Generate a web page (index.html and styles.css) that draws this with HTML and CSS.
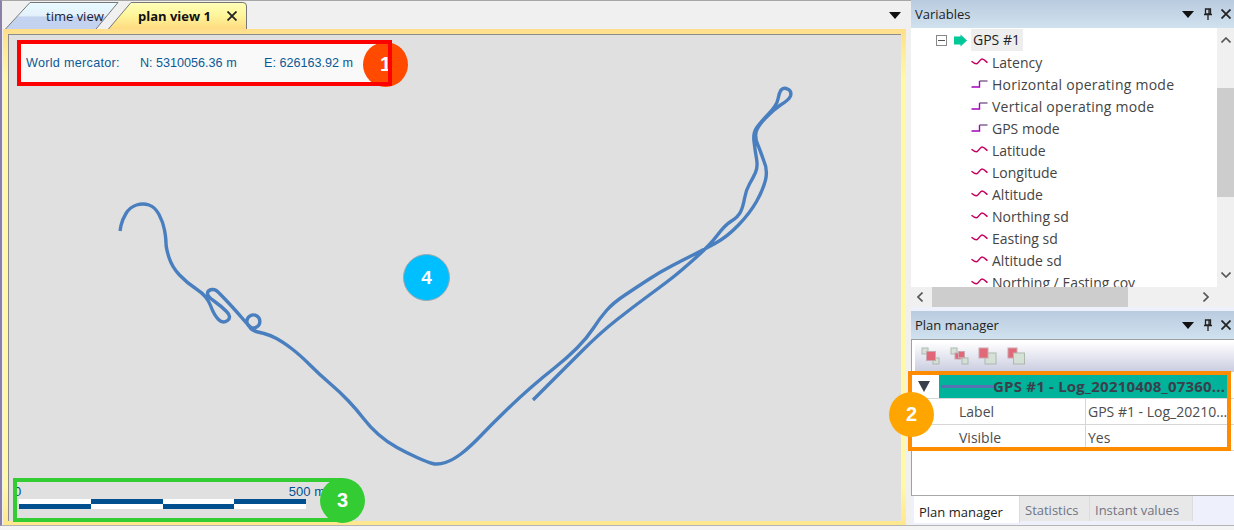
FILE: index.html
```html
<!DOCTYPE html>
<html lang="en">
<head>
<meta charset="utf-8">
<title>plan view 1</title>
<link rel="stylesheet" href="styles.css">
</head>
<body>
<svg class="defs" width="0" height="0" aria-hidden="true">
  <symbol id="wave" viewBox="0 0 17 8"><path d="M.5 3.200C2 4.500 3.500 5.800 5.500 5.800 7.500 5.800 9 1 11 1 13 1 15 3.500 16.500 4.700" fill="none" stroke="#c6005f" stroke-width="1.500"/></symbol>
  <symbol id="step" viewBox="0 0 17 8"><path d="M.5 7H8.500V1" fill="none" stroke="#a800c0" stroke-width="1.400"/><path d="M8.500 1H16.500" fill="none" stroke="#7a5a8a" stroke-width="1.400"/></symbol>
  <symbol id="menu" viewBox="0 0 12 7"><path d="M0 0H12L6 7Z" fill="#111"/></symbol>
  <symbol id="pin" viewBox="0 0 10 12"><path d="M2.500 1H7.500V6H2.500ZM6 1V6M1 6.500H9M5 7V12" fill="none" stroke="#222" stroke-width="1.300"/></symbol>
  <symbol id="close" viewBox="0 0 10 10"><path d="M.5.500 9.500 9.500M9.500.500.500 9.500" fill="none" stroke="#222" stroke-width="1.800"/></symbol>
  <symbol id="chev-up" viewBox="0 0 10 6"><path d="M.5 5.500 5 1l4.500 4.500" fill="none" stroke="#555" stroke-width="1.600"/></symbol>
  <symbol id="chev-down" viewBox="0 0 10 6"><path d="M.5.500 5 5 9.500.500" fill="none" stroke="#555" stroke-width="1.600"/></symbol>
  <symbol id="chev-left" viewBox="0 0 6 10"><path d="M5.500.500 1 5l4.500 4.500" fill="none" stroke="#555" stroke-width="1.600"/></symbol>
  <symbol id="chev-right" viewBox="0 0 6 10"><path d="M.5.500 5 5 .5 9.500" fill="none" stroke="#555" stroke-width="1.600"/></symbol>
</svg>

<div class="app">
  <main class="main">
    <div class="tabstrip">
      <div class="doc-tab doc-tab-time">
        <svg class="tab-shape" viewBox="0 0 114 27" preserveAspectRatio="none"><defs><linearGradient id="tg1" x1="0" y1="0" x2="0" y2="1"><stop offset="0" stop-color="#eafcff"/><stop offset=".5" stop-color="#e2f0fb"/><stop offset=".55" stop-color="#c4d3ee"/><stop offset="1" stop-color="#c3d2f0"/></linearGradient></defs><path d="M.5 27 25 .5H113L91 27" fill="url(#tg1)" stroke="#777"/></svg>
        <span class="tab-label">time view</span>
      </div>
      <div class="doc-tab doc-tab-plan">
        <svg class="tab-shape" viewBox="0 0 139 27" preserveAspectRatio="none"><defs><linearGradient id="tg2" x1="0" y1="0" x2="0" y2="1"><stop offset="0" stop-color="#ffffb8"/><stop offset=".5" stop-color="#fff59a"/><stop offset="1" stop-color="#ffda80"/></linearGradient></defs><path d="M.5 27 23 .5H135Q138.500 .5 138.500 4V27" fill="url(#tg2)" stroke="#777"/></svg>
        <span class="tab-label tab-label-active">plan view 1</span>
        <svg class="tab-close"><use href="#close"/></svg>
      </div>
      <svg class="strip-menu"><use href="#menu"/></svg>
    </div>
    <div class="frame">
      <div class="canvas">
        <svg class="track" viewBox="9 35 892 486">
          <path d="M120 231L121 225.500Q122 220 126 213.500Q130 207 136.500 205Q143 203 149 205Q155 207 159 214.500Q163 222 164.500 230Q166 238 166 243Q166 248 169 257.500Q172 267 179.500 275Q187 283 197 289.500Q207 296 210.500 305.500Q214 315 218.500 319.500Q223 324 227.500 320.500Q232 317 226.500 311.500Q221 306 214 301Q207 296 207.500 293Q208 290 212 289.500Q216 289 220 294Q224 298 230.500 305Q237 312 242.500 318.500Q246 323 251 327.500A6.500 6.500 0 1 0 249.400 326.600Q251 330 256 331.500Q260 332.700 264 333.500Q270 335 276.500 338.500Q283 342 291.500 348.500Q300 355 310 365Q320 375 330 383.500Q340 392 348.500 401Q357 410 363.500 418.500Q370 427 378.500 434.500Q387 442 397 447.500Q407 453 417 457.500Q427 462 432.500 463.500Q438 465 445.500 462.500Q453 460 461.500 453.500Q470 447 481.500 435Q493 423 506.500 410Q520 397 531.500 387Q543 377 555 367.500Q567 358 577 348Q587 338 593.500 328Q600 318 606.500 310.500Q613 303 625 295Q637 287 648.500 279.500Q660 272 671.500 266Q683 260 693 255Q703 250 715 243.500Q727 237 738.500 225Q750 213 756.500 201.500Q763 190 765.500 180Q768 170 763.500 160Q760 150 757.500 144Q755 138 756 132.500Q757 127 765 118.500Q773 110 780.500 105Q789 100 790.500 96Q792 91 787.500 89Q784 87 781 90Q779 93 778 99Q777 105 768.500 114Q760 123 756.500 128Q753 133 754 141.500Q755 150 756.500 158.500Q758 167 755.500 172.500Q753 178 749.500 184Q746 190 744.500 198.500Q743 207 740.500 212Q738 217 731.500 221Q725 225 717.500 235Q710 245 696 257.500Q682 270 674.500 276Q667 282 650 294.500Q633 307 616.500 320Q600 333 581.500 351.500Q563 370 548 385L533 400"/>
        </svg>
        <div class="coords">
          <span class="coord-world">World mercator:</span>
          <span class="coord-n">N: 5310056.36 m</span>
          <span class="coord-e">E: 626163.92 m</span>
        </div>
        <div class="scale">
          <div class="scale-labels"><span>0</span><span>500 m</span></div>
          <div class="scale-bar">
            <i class="seg seg-low"></i><i class="seg seg-high"></i><i class="seg seg-low"></i><i class="seg seg-high"></i>
          </div>
        </div>
      </div>
    </div>
  </main>

  <aside class="side">
    <section class="pane pane-vars">
      <header class="pane-head">
        <span class="pane-title">Variables</span>
        <svg class="ico-menu"><use href="#menu"/></svg>
        <svg class="ico-pin"><use href="#pin"/></svg>
        <svg class="ico-close"><use href="#close"/></svg>
      </header>
      <div class="tree-wrap">
        <div class="tree">
          <div class="node node-root">
            <span class="expander"></span>
            <svg class="arrow" viewBox="0 0 13 13"><path d="M0 2.500H6.500V.5L13 6.500 6.500 12.500V10.500H0Z" fill="#00c896"/></svg>
            <span class="node-sel">GPS #1</span>
          </div>
          <div class="node"><svg class="vi"><use href="#wave"/></svg>Latency</div>
          <div class="node node-wide"><svg class="vi"><use href="#step"/></svg>Horizontal operating mode</div>
          <div class="node node-wide"><svg class="vi"><use href="#step"/></svg>Vertical operating mode</div>
          <div class="node"><svg class="vi"><use href="#step"/></svg>GPS mode</div>
          <div class="node"><svg class="vi"><use href="#wave"/></svg>Latitude</div>
          <div class="node"><svg class="vi"><use href="#wave"/></svg>Longitude</div>
          <div class="node"><svg class="vi"><use href="#wave"/></svg>Altitude</div>
          <div class="node"><svg class="vi"><use href="#wave"/></svg>Northing sd</div>
          <div class="node"><svg class="vi"><use href="#wave"/></svg>Easting sd</div>
          <div class="node"><svg class="vi"><use href="#wave"/></svg>Altitude sd</div>
          <div class="node"><svg class="vi"><use href="#wave"/></svg>Northing / Easting cov</div>
        </div>
        <div class="vscroll">
          <svg class="chev-v"><use href="#chev-up"/></svg>
          <div class="vtrack"><div class="vthumb"></div></div>
          <svg class="chev-v"><use href="#chev-down"/></svg>
        </div>
      </div>
      <div class="hscroll">
        <svg class="chev-h"><use href="#chev-left"/></svg>
        <div class="htrack"><div class="hthumb"></div></div>
        <svg class="chev-h"><use href="#chev-right"/></svg>
      </div>
    </section>

    <section class="pane pane-plan">
      <header class="pane-head">
        <span class="pane-title">Plan manager</span>
        <svg class="ico-menu"><use href="#menu"/></svg>
        <svg class="ico-pin"><use href="#pin"/></svg>
        <svg class="ico-close"><use href="#close"/></svg>
      </header>
      <div class="plan-body">
        <div class="toolbar">
          <svg class="tool" viewBox="0 0 19 18"><rect x="1" y="1" width="6" height="6" class="sq-l"/><rect x="12" y="11" width="6" height="6" class="sq-l"/><rect x="5.500" y="4.500" width="9" height="9" class="sq-r"/></svg>
          <svg class="tool" viewBox="0 0 19 18"><rect x="1" y="1" width="6" height="6" class="sq-l"/><rect x="12" y="11" width="6" height="6" class="sq-l"/><rect x="5" y="6" width="6" height="6" class="sq-r"/><rect x="8.500" y="4.500" width="6" height="6" class="sq-r"/></svg>
          <svg class="tool" viewBox="0 0 19 18"><rect x="7" y="6" width="11" height="11" class="sq-l"/><rect x="1" y="1" width="9" height="10" class="sq-r"/></svg>
          <svg class="tool" viewBox="0 0 19 18"><rect x="1" y="1" width="9" height="10" class="sq-r"/><rect x="6.500" y="6" width="11" height="11" class="sq-l"/></svg>
        </div>
        <div class="group-row">
          <span class="group-toggle"><svg class="toggle-ico" viewBox="0 0 12 11"><path d="M0 0H12L6 11Z" fill="#3a3f4c"/></svg></span>
          <div class="group-head">
            <span class="group-line"></span>
            <span class="group-title">GPS #1 - Log_20210408_07360...</span>
          </div>
        </div>
        <div class="prop-row"><span class="prop-key">Label</span><span class="prop-val">GPS #1 - Log_20210...</span></div>
        <div class="prop-row"><span class="prop-key">Visible</span><span class="prop-val">Yes</span></div>
      </div>
      <nav class="pane-tabs">
        <span class="ptab ptab-active">Plan manager</span>
        <span class="ptab ptab-stats">Statistics</span>
        <span class="ptab ptab-inst">Instant values</span>
      </nav>
    </section>
  </aside>

  <div class="badge badge-1">1</div>
  <div class="mark mark-red"></div>
  <div class="mark mark-green"></div>
  <div class="badge badge-3">3</div>
  <div class="badge badge-4">4</div>
  <div class="mark mark-orange"></div>
  <div class="badge badge-2">2</div>
</div>
</body>
</html>
```

FILE: styles.css
```css
* { box-sizing: border-box; }
html, body { margin: 0; padding: 0; }
body { font-family: "Open Sans", "Liberation Sans", sans-serif; font-size: 14px; color: #333; overflow: hidden; }
.defs { position: absolute; }
svg { display: block; }

.app { position: relative; display: flex; align-items: flex-start; width: 1234px; height: 530px; background: #f4f4f4; overflow: hidden; }

/* ---- left document area ---- */
.main { width: 911px; height: 526px; display: flex; flex-direction: column; background: #f0f0f0; border-top: 1px solid #a6a6a6; border-left: 2px solid #8a7fa6; border-bottom: 1px solid #b4b4b4; }
.tabstrip { display: flex; height: 28px; position: relative; padding-left: 3px; padding-top: 1px; }
.doc-tab { position: relative; height: 27px; display: flex; align-items: center; }
.tab-shape { position: absolute; inset: 0; width: 100%; height: 100%; }
.doc-tab-time { width: 114px; padding-left: 41px; }
.doc-tab-plan { width: 139px; margin-left: -11px; padding-left: 30px; }
.tab-label { position: relative; font-size: 13px; color: #223; }
.tab-label-active { font-weight: 700; color: #111; }
.tab-close { position: relative; width: 10px; height: 10px; margin-left: 16px; }
.strip-menu { position: absolute; right: 10px; top: 11px; width: 12px; height: 7px; }

.frame { flex: 1; margin-left: 1px; margin-right: 5px; padding: 5px 5px 4px 5px; background: linear-gradient(#ffdf8c, #fff9a6 10%, #fff9a6 92%, #ffe78e); display: flex; }
.canvas { position: relative; flex: 1; background: #e0e0e0; border-top: 1px solid #8c8c8c; border-left: 1px solid #8c8c8c; overflow: hidden; }
.track { position: absolute; left: 0; top: 0; width: 892px; height: 486px; }
.track path { fill: none; stroke: #4a7fbf; stroke-width: 3.4; stroke-linejoin: round; }

.coords { position: absolute; left: 12px; top: 9px; width: 368px; height: 38px; background: #f9f9f9; display: flex; align-items: center; font-family: "Liberation Sans", sans-serif; font-size: 12.6px; color: #0a5a96; }
.coord-world { margin-left: 5px; width: 114px; letter-spacing: .3px; }
.coord-n { width: 124px; }

.scale { position: absolute; left: 10px; top: 449px; width: 320px; font-family: "Liberation Sans", sans-serif; font-size: 13px; color: #00508f; }
.scale-labels { display: flex; justify-content: space-between; height: 15px; line-height: 15px; margin-left: -5px; padding-right: 14px; }
.scale-bar { display: flex; width: 287px; height: 10px; }
.seg { flex: 1; display: block; background: #fff; }
.seg-low { background: linear-gradient(#fff 50%, #005090 50%); }
.seg-high { background: linear-gradient(#005090 50%, #fff 50%); }

/* ---- right panes ---- */
.side { width: 323px; height: 526px; display: flex; flex-direction: column; background: #eef1fb; border-bottom: 1px solid #b4b4b4; }
.pane-head { display: flex; align-items: center; height: 28px; padding-left: 4px; background: linear-gradient(#b9cbde, #d0e1ef); font-size: 13px; color: #222; }
.pane-title { flex: 1; }
.ico-menu { width: 12px; height: 7px; margin-right: 9px; }
.ico-pin { width: 10px; height: 12px; margin-right: 8px; }
.ico-close { width: 10px; height: 10px; margin-right: 3px; }

.pane-vars { height: 311px; display: flex; flex-direction: column; }
.tree-wrap { display: flex; height: 259px; background: #fff; }
.tree { flex: 1; overflow: hidden; padding-top: 1px; }
.node { height: 22px; display: flex; align-items: center; padding-left: 60px; color: #444; white-space: nowrap; }
.node-wide { letter-spacing: .25px; }
.node-root { padding-left: 25px; color: #222; }
.expander { width: 11px; height: 11px; border: 1px solid #888; margin-right: 7px; position: relative; background: #fff; }
.expander::after { content: ""; position: absolute; left: 1px; right: 1px; top: 4px; height: 1px; background: #555; }
.arrow { width: 13px; height: 13px; margin-right: 4px; }
.node-sel { background: #eee; height: 22px; line-height: 22px; padding: 0 3px 0 2px; }
.vi { width: 17px; height: 8px; margin-right: 4px; }

.vscroll { width: 17px; background: #f0f0f0; display: flex; flex-direction: column; align-items: center; padding-top: 9px; }
.chev-v { width: 10px; height: 6px; }
.vtrack { flex: 1; width: 100%; padding-top: 45px; }
.vthumb { height: 109px; background: #cdcdcd; }
.vscroll .chev-v:last-child { margin-bottom: 9px; }

.hscroll { display: flex; align-items: center; height: 20px; background: #f0f0f0; padding: 0 25px 0 6px; }
.chev-h { width: 6px; height: 10px; }
.htrack { flex: 1; padding-left: 9px; padding-right: 75px; }
.hthumb { height: 20px; background: #cdcdcd; }

.pane-plan { flex: 1; display: flex; flex-direction: column; }
.plan-body { height: 157px; background: #fff; border-top: 1px solid #a0a0a0; border-left: 1px solid #a0a0a0; border-bottom: 1px solid #a8a8a8; padding-top: 2px; }
.toolbar { display: flex; gap: 9.5px; height: 30px; padding: 5px 0 0 6px; margin-left: 3px; background: linear-gradient(#fff, #c9cce0); }
.tool { width: 19px; height: 18px; opacity: .9; }
.sq-l { fill: #d4e0d4; stroke: #a8b4a8; }
.sq-r { fill: #e05a6a; stroke: #c8a0a8; }

.group-row { display: flex; height: 27px; padding-top: 2px; padding-right: 4px; border-bottom: 1px solid #d6d6d6; }
.group-toggle { width: 27px; display: flex; align-items: center; padding-left: 6px; }
.toggle-ico { width: 12px; height: 11px; }
.group-head { flex: 1; background: #00b39a; display: flex; align-items: center; padding-left: 2px; overflow: hidden; }
.group-line { width: 52px; height: 3px; background: #5a70b4; flex: none; }
.group-title { font-weight: 700; font-size: 15px; letter-spacing: .2px; color: #3a3f4c; white-space: nowrap; }

.prop-row { display: flex; height: 26px; align-items: center; border-bottom: 1px solid #d6d6d6; color: #4c4c4c; }
.prop-key { width: 174px; height: 100%; line-height: 26px; padding-left: 47px; border-right: 1px solid #d6d6d6; }
.prop-val { padding-left: 2px; white-space: nowrap; }

.pane-tabs { display: flex; align-items: flex-start; height: 28px; padding-left: 3px; font-size: 13px; }
.ptab { display: flex; align-items: center; height: 25px; padding: 2px 0 0 5px; background: #e8e8e8; color: #707484; border-right: 1px solid #dcdcdc; }
.ptab-active { width: 106px; background: #fff; color: #222; height: 27px; padding-top: 4px; }
.ptab-stats { width: 70px; }
.ptab-inst { width: 103px; }

/* ---- annotations ---- */
.mark { position: absolute; background: transparent; }
.mark-red { left: 17px; top: 40px; width: 375px; height: 46px; border: 4px solid #ff0000; }
.mark-green { left: 13px; top: 478px; width: 330px; height: 44px; border: 4px solid #33cc33; border-right: 0; }
.mark-orange { left: 908px; top: 371px; width: 323px; height: 80px; border: 4px solid #ff8c00; }
.badge { position: absolute; width: 45px; height: 45px; border-radius: 50%; display: flex; align-items: center; justify-content: center; color: #fff; font-family: "Liberation Sans", sans-serif; font-weight: 700; font-size: 20px; }
.badge-1 { left: 363px; top: 42px; background: #ff4a00; }
.badge-2 { left: 889px; top: 392px; background: #ffa500; }
.badge-3 { left: 320px; top: 478px; background: #33cc33; }
.badge-4 { left: 403px; top: 254px; width: 47px; height: 47px; background: #00bfff; border: 1px solid #9aa8b0; font-size: 19px; }
```
